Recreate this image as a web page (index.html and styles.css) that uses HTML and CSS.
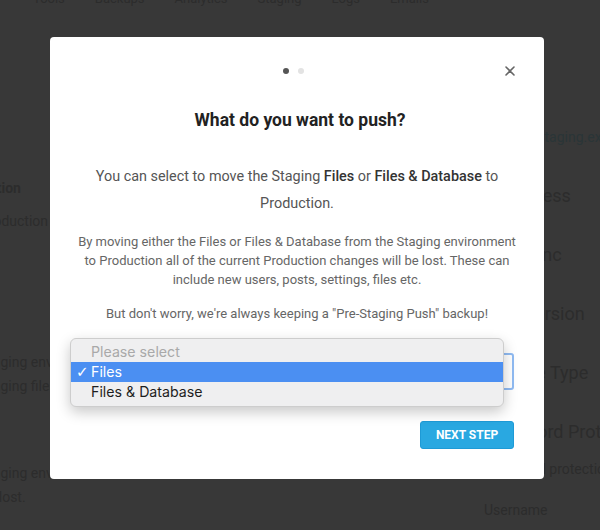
FILE: index.html
```html
<!DOCTYPE html>
<html lang="en">
<head>
<meta charset="utf-8">
<title>Push to Production</title>
<link rel="stylesheet" href="styles.css">
</head>
<body>
<div class="page">
  <nav class="nav">
    <span>Tools</span><span>Backups</span><span>Analytics</span><span>Staging</span><span>Logs</span><span>Emails</span>
  </nav>
  <div class="cols">
    <div class="col-left">
      <section class="bg-sec1">
        <h3 class="bg-head">Action</h3>
        <p class="bg-text">Production</p>
      </section>
      <p class="bg-text bg-pair bg-sec2">Staging environment<br>Staging files</p>
      <p class="bg-text bg-pair bg-sec3">Staging environment<br>be lost.</p>
    </div>
    <div class="col-right">
      <p class="bg-link">yoursite.staging.example.com</p>
      <p class="bg-label">IP Address</p>
      <p class="bg-label">Last Sync</p>
      <p class="bg-label">PHP Version</p>
      <p class="bg-label">Storage Type</p>
      <p class="bg-label">Password Protection</p>
      <p class="bg-small">Password protection</p>
      <p class="bg-small bg-user">Username</p>
    </div>
  </div>
</div>

<div class="overlay">
  <div class="modal">
    <div class="modal-head">
      <div class="dots"><i class="dot dot-on"></i><i class="dot"></i></div>
      <button class="close" aria-label="Close">
        <svg width="10" height="10" viewBox="0 0 10 10"><path d="M1 1L9 9M9 1L1 9" stroke="#666" stroke-width="1.6" stroke-linecap="round"/></svg>
      </button>
    </div>
    <h2 class="title">What do you want to push?</h2>
    <p class="lead">You can select to move the Staging <strong>Files</strong> or <strong>Files &amp; Database</strong> to Production.</p>
    <p class="note">By moving either the Files or Files &amp; Database from the Staging environment to Production all of the current Production changes will be lost. These can include new users, posts, settings, files etc.</p>
    <p class="note">But don't worry, we're always keeping a "Pre-Staging Push" backup!</p>
    <div class="field">
      <div class="select"></div>
      <ul class="popup">
        <li class="opt opt-muted">Please select</li>
        <li class="opt opt-active"><span class="check">✓</span>Files</li>
        <li class="opt">Files &amp; Database</li>
      </ul>
    </div>
    <div class="actions">
      <button class="btn">Next Step</button>
    </div>
  </div>
</div>
</body>
</html>
```

FILE: styles.css
```css
* { box-sizing: border-box; }

html, body {
  margin: 0;
  height: 100%;
}

body {
  background: #383838;
  font-family: Roboto, "Liberation Sans", sans-serif;
  overflow: hidden;
}

/* background page (dimmed) */
.page {
  color: #2c2c2c;
}

.nav {
  display: flex;
  gap: 30px;
  margin-top: -9px;
  padding-left: 33px;
  font-size: 13px;
  line-height: 16px;
  height: 16px;
}

.cols {
  display: grid;
  grid-template-columns: 504px 1fr;
  margin-left: -20px;
  margin-top: 1px;
}

.col-left, .col-right {
  display: flex;
  flex-direction: column;
  white-space: nowrap;
}

.bg-sec1 { margin-top: 170px; }

.bg-head {
  margin: 0 0 13px;
  font-size: 14px;
  line-height: 20px;
  font-weight: 700;
}

.bg-text {
  margin: 0;
  font-size: 14px;
  line-height: 20px;
}

.bg-pair { line-height: 24px; }
.bg-sec2 { margin-top: 119px; }
.bg-sec3 { margin-top: 63px; }

.bg-link {
  margin: 119px 0 0;
  font-size: 14px;
  line-height: 20px;
  color: #2a3537;
}

.bg-label {
  margin: 35px 0 0;
  font-size: 18px;
  line-height: 24px;
}

.bg-link + .bg-label { margin-top: 37px; }

.bg-small {
  margin: 15px 0 0;
  font-size: 14px;
  line-height: 20px;
}

.bg-user { margin-top: 21px; }

/* modal */
.overlay {
  position: fixed;
  inset: 0;
  padding: 37px 0 0 50px;
}

.modal {
  width: 494px;
  height: 442px;
  background: #fff;
  border-radius: 4px;
  padding: 0 30px 29px;
  display: flex;
  flex-direction: column;
  text-align: center;
}

.modal-head {
  display: grid;
  grid-template-columns: 1fr auto 1fr;
  align-items: center;
  padding-top: 29px;
  height: 35px;
}

.dots {
  grid-column: 2;
  display: flex;
  gap: 9px;
  margin-right: 8px;
}

.dot {
  width: 6px;
  height: 6px;
  border-radius: 50%;
  background: #e3e3e3;
}

.dot-on { background: #555; }

.close {
  grid-column: 3;
  justify-self: end;
  width: 10px;
  height: 10px;
  padding: 0;
  border: 0;
  background: none;
  display: flex;
  margin-right: -1px;
}

.title {
  margin: 36px 0 0 6px;
  font-size: 17.5px;
  line-height: 24px;
  font-weight: 700;
  color: #222;
}

.lead {
  margin: 31px 0 0;
  font-size: 14.4px;
  line-height: 27px;
  color: #555;
}

.lead strong {
  font-weight: 500;
  color: #333;
}

.note {
  margin: 15px -6px 0;
  font-size: 13px;
  line-height: 19px;
  color: #666;
}

.field {
  position: relative;
  margin-top: 30px;
}

.select {
  height: 37px;
  border: 2px solid #90bbf3;
  border-radius: 3px;
  background: #fff;
}

.popup {
  position: absolute;
  left: -10px;
  top: -15px;
  width: 434px;
  margin: 0;
  padding: 3px 0 4px;
  list-style: none;
  background: #efeff0;
  border: 1px solid #cdcdcd;
  border-radius: 6px;
  box-shadow: 0 5px 14px rgba(0, 0, 0, 0.22);
  text-align: left;
  font-family: Inter, "Liberation Sans", sans-serif;
  font-size: 14.2px;
  line-height: 20px;
  color: #1e1e1e;
}

.opt {
  position: relative;
  height: 20px;
  padding-left: 20px;
}

.opt-muted { color: #a9a9a9; }

.opt-active {
  background: #4b8ff2;
  color: #fff;
}

.check {
  position: absolute;
  left: 5px;
  top: 0;
  font-family: "DejaVu Sans", sans-serif;
  font-size: 15px;
}

.actions {
  display: flex;
  justify-content: flex-end;
  margin-top: 31px;
}

.btn {
  width: 94px;
  height: 28px;
  padding: 0;
  border: 1px solid #1e9ad6;
  border-radius: 3px;
  background: #29a8e1;
  color: #fff;
  font-family: Roboto, "Liberation Sans", sans-serif;
  font-size: 12px;
  font-weight: 700;
  text-transform: uppercase;
}
```
